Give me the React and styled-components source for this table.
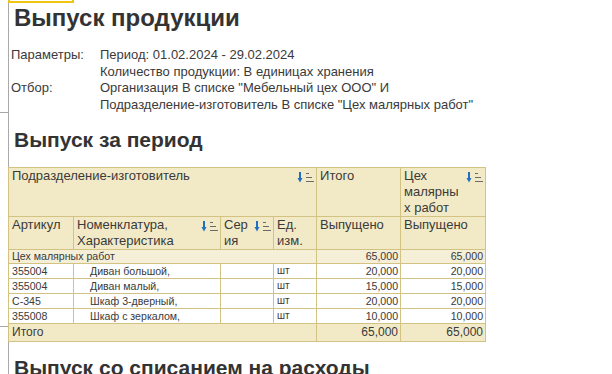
import React from 'react';
import styled, { createGlobalStyle } from 'styled-components';

const GlobalStyle = createGlobalStyle`
  html, body {
    margin: 0;
    padding: 0;
    background: #fff;
    overflow: hidden;
  }
  body {
    font-family: "Liberation Sans", Arial, sans-serif;
    color: #333;
  }
`;

const Page = styled.div`
  position: relative;
  display: grid;
  grid-template-columns: 8px 1fr;
  height: 374px;
  overflow: hidden;
`;

const Gutter = styled.div`
  display: flex;
  flex-direction: column;
`;

const Tick = styled.div`
  height: 1px;
  margin-top: ${(p) => p.$top}px;
  background: #a8a8a8;
`;

const Selection = styled.div`
  position: absolute;
  left: 8px;
  top: -20px;
  width: 62px;
  height: 19px;
  border: 2px solid #f1c40f;
`;

const Sheet = styled.div`
  padding-left: 3px;
  background: linear-gradient(#a9a9a9, #a9a9a9) left top / 1px 100% no-repeat;
`;

const Title = styled.h1`
  margin: 4px 0 0 3px;
  font-size: 24px;
  line-height: 27px;
  font-weight: bold;
  color: #333;
`;

const Params = styled.div`
  display: grid;
  grid-template-columns: 89px 1fr;
  margin-top: 16px;
  font-size: 13px;
  line-height: 16.67px;
  color: #3a3a3a;
`;

const SectionTitle = styled.h2`
  margin: ${(p) => p.$top}px 0 0 3px;
  font-size: 21px;
  line-height: 24px;
  font-weight: bold;
  color: #333;
  white-space: nowrap;
`;

const Table = styled.table`
  margin: 15px 0 0 -3px;
  border-collapse: collapse;
  table-layout: fixed;
  width: 478px;
  color: #3a3a3a;
`;

const Th = styled.td`
  vertical-align: top;
  background: #f2eac6;
  border: 1px solid #d3c383;
  padding: 0 2px ${(p) => p.$bottom || 0}px 3px;
  font-size: 13px;
  line-height: 16px;
`;

const HeadInner = styled.div`
  display: flex;
  align-items: flex-start;
  justify-content: space-between;
`;

const HeadLabel = styled.span`
  width: ${(p) => (p.$w ? `${p.$w}px` : 'auto')};
  overflow-wrap: anywhere;
`;

const SortIcon = styled.svg`
  flex: none;
  margin-top: 4px;
`;

const Td = styled.td`
  vertical-align: top;
  border: 1px solid #d3c383;
  background: ${(p) => (p.$group ? '#f6efd8' : p.$total ? '#f2eac6' : '#fff')};
  padding: 0 2px 0 ${(p) => p.$indent || 3}px;
  font-size: ${(p) => (p.$total ? 12 : p.$small ? 10 : 10.6)}px;
  line-height: ${(p) => (p.$total ? 17 : p.$group ? 13 : 14)}px;
  text-align: ${(p) => (p.$num ? 'right' : 'left')};
  white-space: nowrap;
  overflow: hidden;
`;

const Sort = () => (
  <SortIcon width="17" height="11" viewBox="0 0 17 11">
    <rect x="2" y="0" width="2" height="7" fill="#1f6fc4" />
    <polygon points="0.5,6 5.5,6 3,10.5" fill="#1f6fc4" />
    <rect x="9" y="1" width="3" height="1" fill="#6a6a6a" />
    <rect x="9" y="5" width="6" height="1" fill="#6a6a6a" />
    <rect x="9" y="9" width="8" height="1" fill="#6a6a6a" />
  </SortIcon>
);

const Head = ({ children, w, sort, ...rest }) => (
  <Th {...rest}>
    <HeadInner>
      <HeadLabel $w={w}>{children}</HeadLabel>
      {sort && <Sort />}
    </HeadInner>
  </Th>
);

const rows = [
  { code: '355004', name: 'Диван большой,', qty: '20,000' },
  { code: '355004', name: 'Диван малый,', qty: '15,000' },
  { code: 'С-345', name: 'Шкаф 3-дверный,', qty: '20,000' },
  { code: '355008', name: 'Шкаф с зеркалом,', qty: '10,000' }
];

const App = () => (
  <>
    <GlobalStyle />
    <Page>
      <Selection />
      <Gutter>
        <Tick $top={112} />
        <Tick $top={213} />
      </Gutter>
      <Sheet>
        <Title>Выпуск продукции</Title>
        <Params>
          <div>Параметры:</div>
          <div>Период: 01.02.2024 - 29.02.2024</div>
          <div />
          <div>Количество продукции: В единицах хранения</div>
          <div>Отбор:</div>
          <div>Организация В списке "Мебельный цех ООО" И</div>
          <div />
          <div>Подразделение-изготовитель В списке "Цех малярных работ"</div>
        </Params>

        <SectionTitle $top={14}>Выпуск за период</SectionTitle>
        <Table>
          <colgroup>
            <col style={{ width: 65 }} />
            <col style={{ width: 147 }} />
            <col style={{ width: 53 }} />
            <col style={{ width: 43 }} />
            <col style={{ width: 84 }} />
            <col style={{ width: 85 }} />
          </colgroup>
          <tbody>
            <tr>
              <Head colSpan={4} sort>Подразделение-изготовитель</Head>
              <Head>Итого</Head>
              <Head w={55} sort>Цех малярных работ</Head>
            </tr>
            <tr>
              <Head $bottom={1}>Артикул</Head>
              <Head sort>Номенклатура, Характеристика</Head>
              <Head w={29} sort>Серия</Head>
              <Head>Ед. изм.</Head>
              <Head>Выпущено</Head>
              <Head>Выпущено</Head>
            </tr>
            <tr>
              <Td $group colSpan={4}>Цех малярных работ</Td>
              <Td $group $num>65,000</Td>
              <Td $group $num>65,000</Td>
            </tr>
            {rows.map((row, index) => (
              <tr key={index.toString()}>
                <Td>{row.code}</Td>
                <Td $indent={16}>{row.name}</Td>
                <Td />
                <Td $small>шт</Td>
                <Td $num>{row.qty}</Td>
                <Td $num>{row.qty}</Td>
              </tr>
            ))}
            <tr>
              <Td $total colSpan={4}>Итого</Td>
              <Td $total $num>65,000</Td>
              <Td $total $num>65,000</Td>
            </tr>
          </tbody>
        </Table>

        <SectionTitle $top={14}>Выпуск со списанием на расходы</SectionTitle>
      </Sheet>
    </Page>
  </>
);

export default App;
